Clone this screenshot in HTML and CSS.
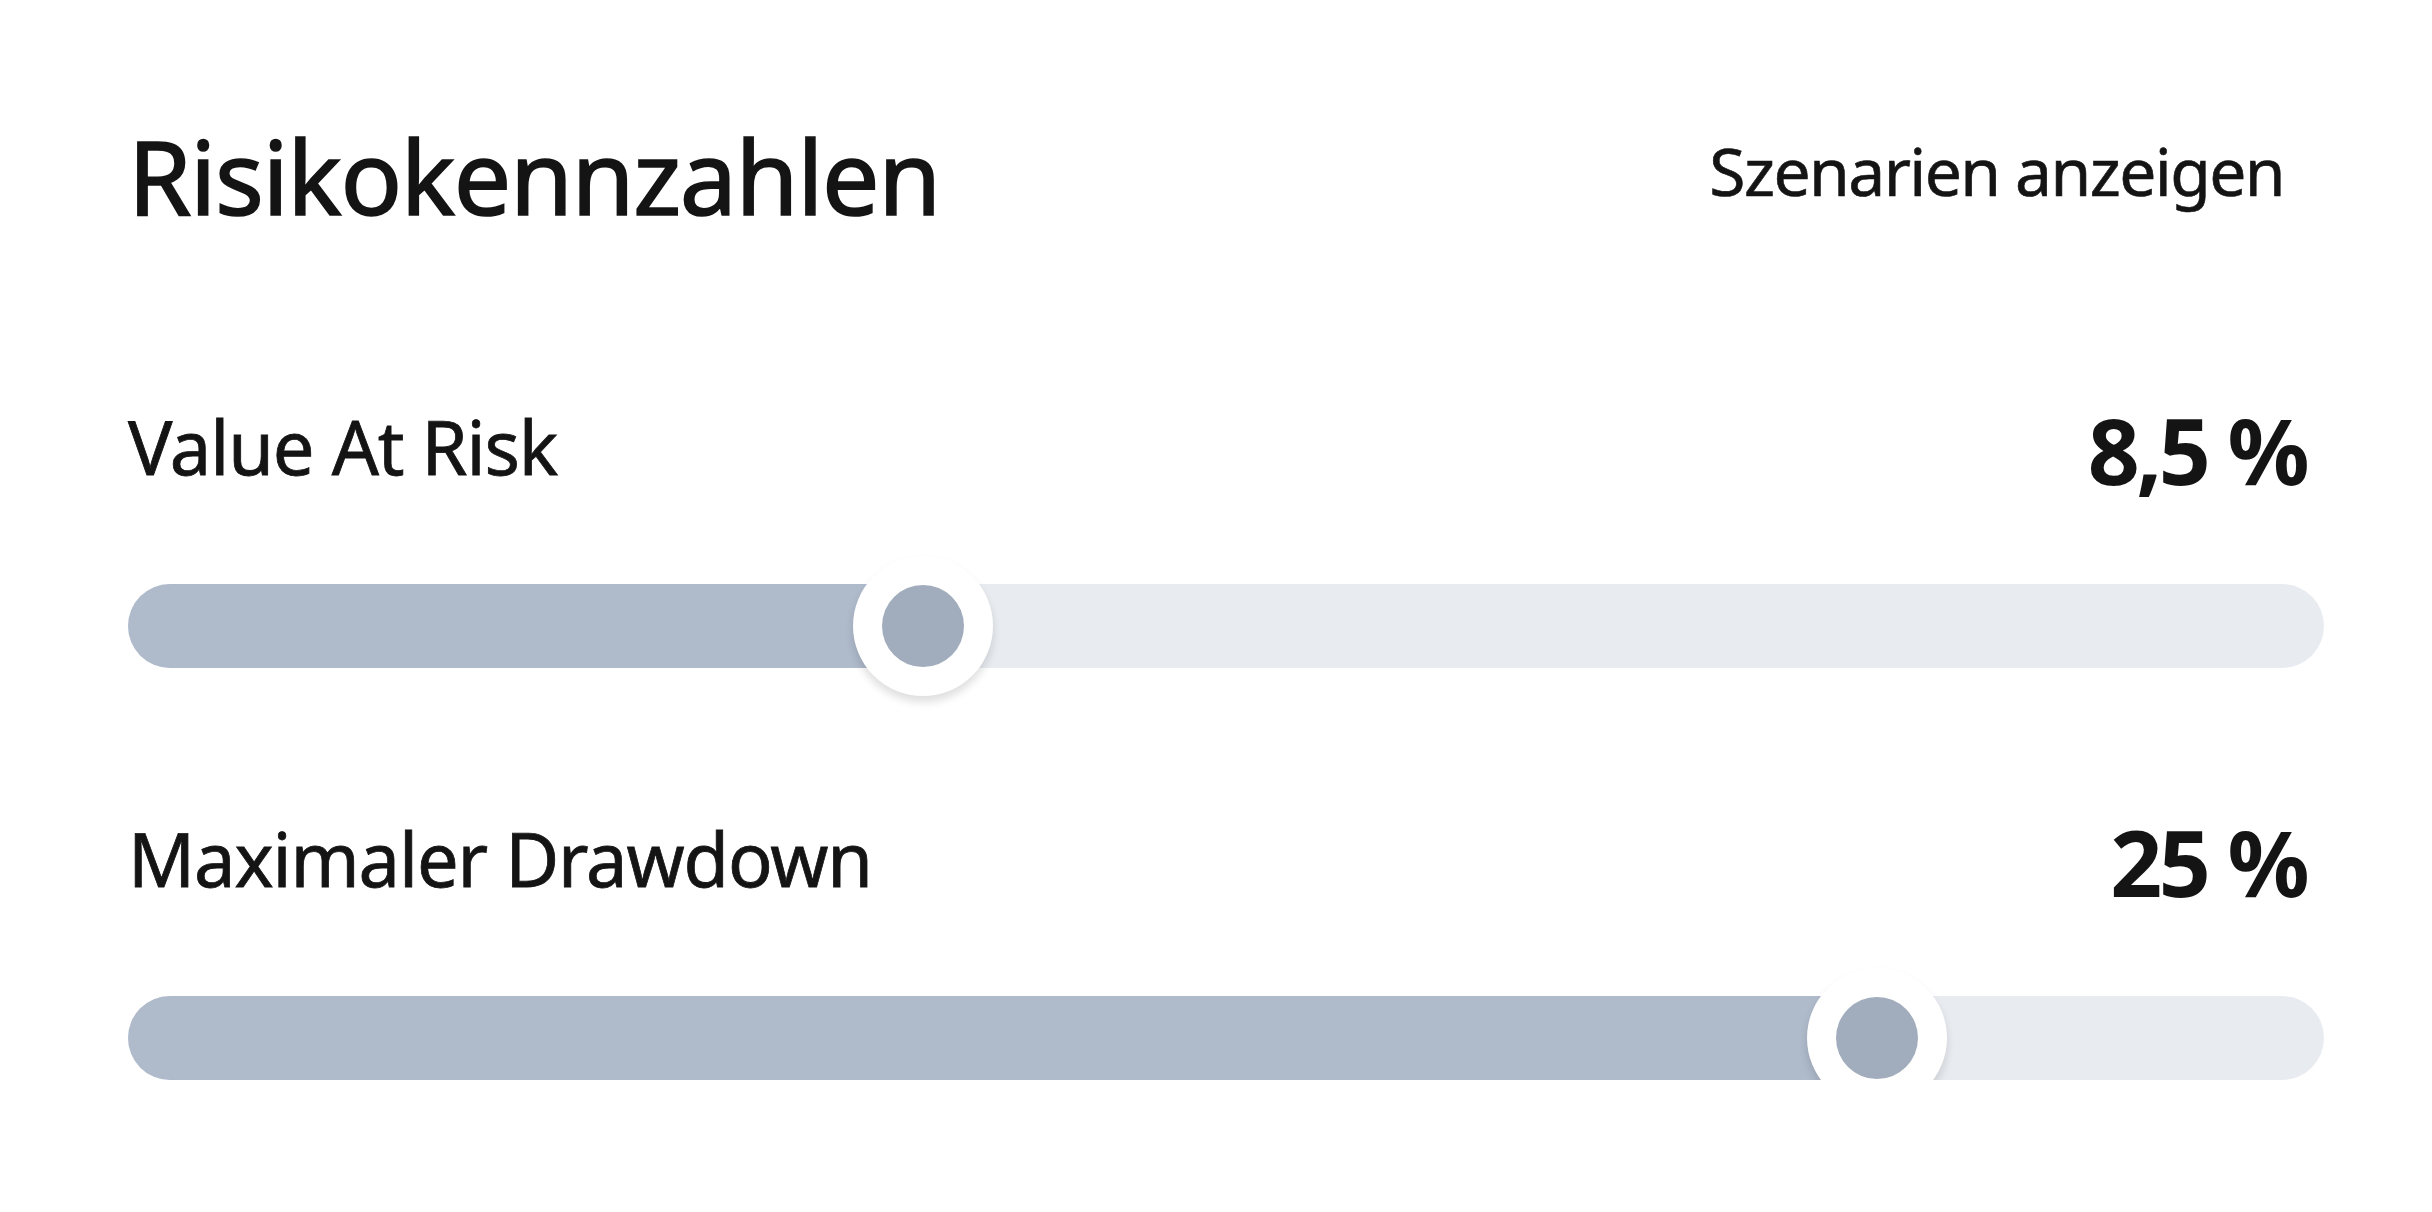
FILE: index.html
```html
<!DOCTYPE html>
<html lang="de">
<head>
<meta charset="utf-8">
<title>Risikokennzahlen</title>
<link rel="stylesheet" href="styles.css">
</head>
<body>
<section class="panel">
  <header class="panel-header">
    <h1 class="panel-title">Risikokennzahlen</h1>
    <a class="panel-link" href="#">Szenarien anzeigen</a>
  </header>
  <div class="metric">
    <div class="metric-row">
      <span class="metric-label">Value At Risk</span>
      <span class="metric-value">8,5 %</span>
    </div>
    <div class="track">
      <div class="track-fill" style="width: 36.2%"></div>
      <div class="knob" style="left: 36.2%"><span class="knob-dot"></span></div>
    </div>
  </div>
  <div class="metric">
    <div class="metric-row">
      <span class="metric-label">Maximaler Drawdown</span>
      <span class="metric-value">25 %</span>
    </div>
    <div class="track">
      <div class="track-fill" style="width: 79.65%"></div>
      <div class="knob" style="left: 79.65%"><span class="knob-dot"></span></div>
    </div>
  </div>
</section>
</body>
</html>
```

FILE: styles.css
```css
html, body {
  margin: 0;
  padding: 0;
  background: #ffffff;
}

body {
  font-family: "Noto Sans", "Open Sans", "DejaVu Sans", sans-serif;
  color: #141414;
}

.panel {
  width: 2196px;
  padding: 115px 0 0 128px;
  display: flex;
  flex-direction: column;
  gap: 139px;
}

.panel-header {
  display: flex;
  justify-content: space-between;
  align-items: flex-start;
  margin-bottom: 19px;
}

.panel-title {
  margin: 0;
  font-size: 102px;
  line-height: 122px;
  font-weight: 400;
  letter-spacing: -1.4px;
  -webkit-text-stroke: 1.6px #141414;
}

.panel-link {
  margin-top: 15px;
  margin-right: 40px;
  font-size: 66px;
  line-height: 80px;
  letter-spacing: -1.6px;
  -webkit-text-stroke: 0.6px #141414;
  color: #141414;
  text-decoration: none;
}

.metric {
  display: flex;
  flex-direction: column;
  gap: 79px;
}

.metric-row {
  display: flex;
  justify-content: space-between;
  align-items: flex-start;
}

.metric-label {
  margin-top: 7px;
  font-size: 74px;
  line-height: 90px;
  letter-spacing: -1.1px;
  -webkit-text-stroke: 0.8px #141414;
}

.metric-value {
  margin-right: 18px;
  font-size: 91px;
  line-height: 110px;
  font-weight: 700;
  letter-spacing: -3.5px;
}

.track {
  position: relative;
  height: 84px;
  border-radius: 42px;
  background: #e8ebf0;
}

.track-fill {
  height: 100%;
  border-radius: 42px 0 0 42px;
  background: #afbacb;
}

.knob {
  position: absolute;
  top: 50%;
  width: 140px;
  height: 140px;
  margin: -70px 0 0 -70px;
  border-radius: 50%;
  background: #ffffff;
  box-shadow: 0 6px 8px rgba(0, 0, 0, 0.13);
  display: flex;
  align-items: center;
  justify-content: center;
}

.knob-dot {
  width: 82px;
  height: 82px;
  border-radius: 50%;
  background: #a1acbc;
}
```
